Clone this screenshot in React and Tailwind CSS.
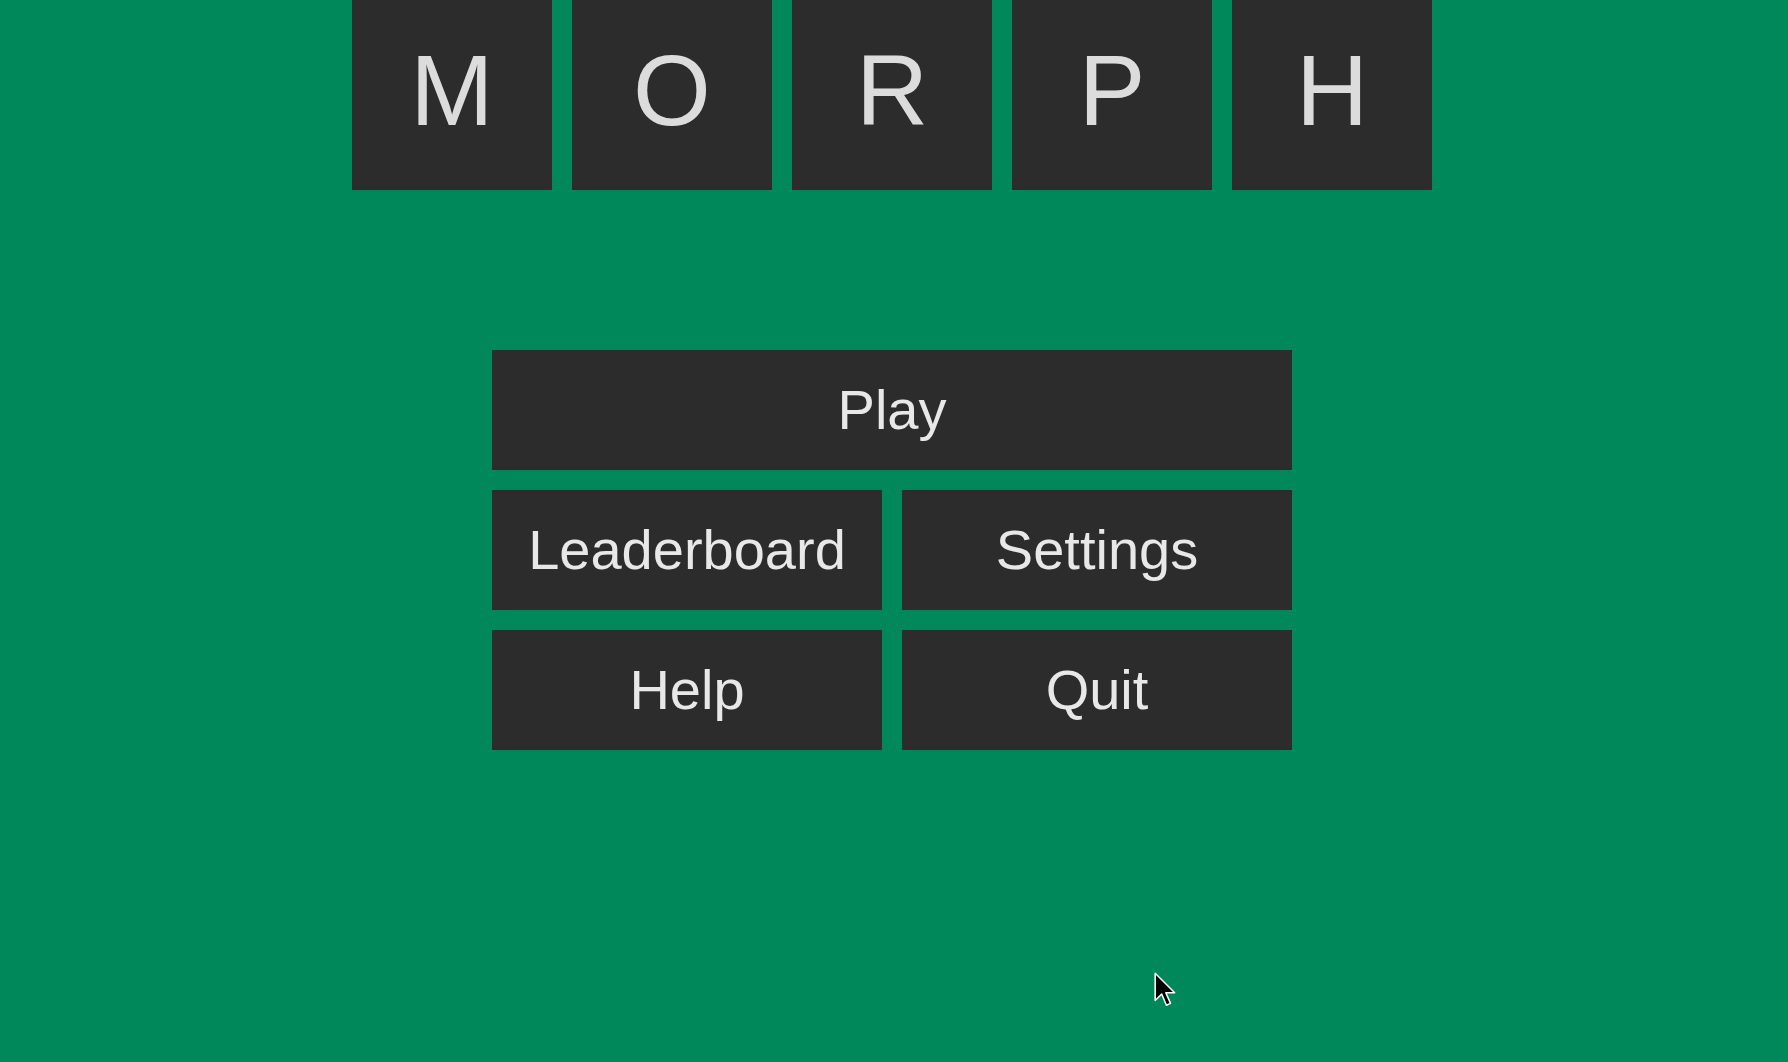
import React from 'react'

const letters = ['M', 'O', 'R', 'P', 'H']

const MenuButton = ({ label, className = '' }) => (
  <button className={`h-[120px] bg-[#2c2c2c] text-[#e8e8e8] text-[56px] leading-none flex items-center justify-center ${className}`}>
    {label}
  </button>
)

const App = () => {
  return (
    <div className="relative min-h-[1062px] bg-[#00875a] flex flex-col items-center font-['Liberation_Sans',Arial,sans-serif] pr-[4px]">
      {/* title tiles */}
      <div className="flex gap-5">
        {letters.map((l) => (
          <div key={l} className="w-[200px] h-[190px] bg-[#2c2c2c] text-[#dcdcdc] text-[100px] leading-none flex items-center justify-center pb-[11px]">
            {l}
          </div>
        ))}
      </div>

      {/* menu */}
      <div className="mt-[160px] w-[800px] flex flex-col gap-5">
        <MenuButton label="Play" className="w-full" />
        <div className="grid grid-cols-2 gap-5">
          <MenuButton label="Leaderboard" />
          <MenuButton label="Settings" />
        </div>
        <div className="grid grid-cols-2 gap-5">
          <MenuButton label="Help" />
          <MenuButton label="Quit" />
        </div>
      </div>

      {/* mouse cursor */}
      <svg className="absolute left-[1154px] top-[972px]" width="26" height="38" viewBox="0 0 22 32">
        <path d="M1 1 L1 24 L6.5 18.5 L10.5 28 L14 26.5 L10 17.5 L17.5 17.5 Z" fill="#000" stroke="#fff" strokeWidth="1.3" strokeLinejoin="round" />
      </svg>
    </div>
  )
}

export default App
